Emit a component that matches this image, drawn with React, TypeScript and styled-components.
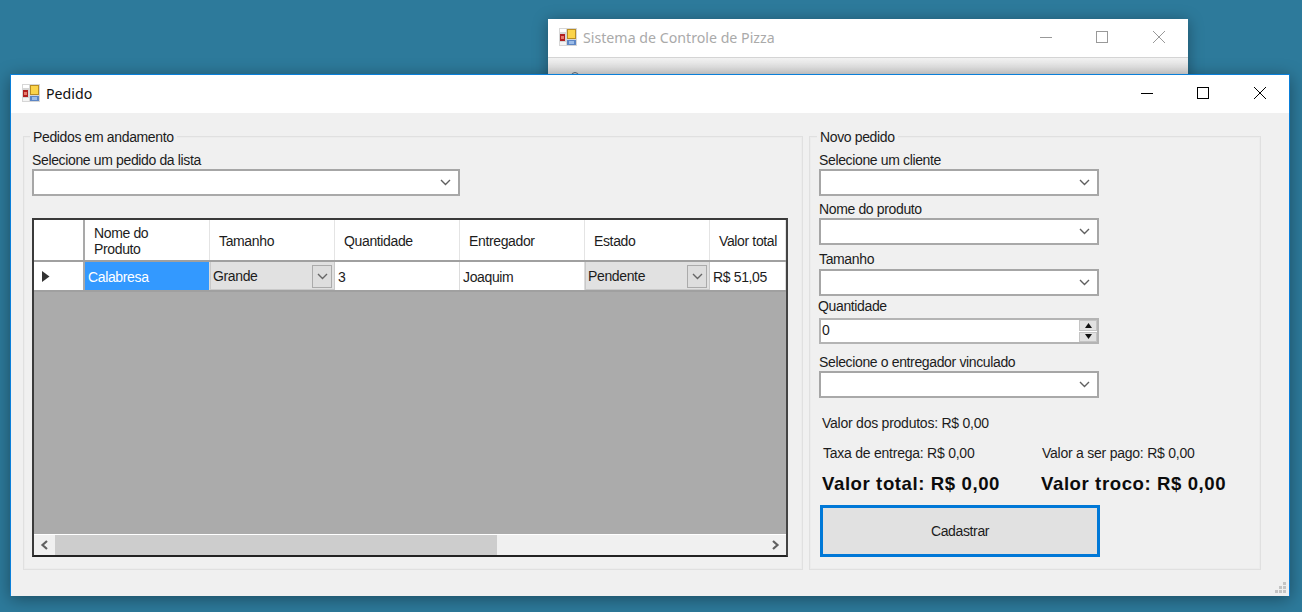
import React from "react";
import styled, { createGlobalStyle } from "styled-components";

const Global = createGlobalStyle`
  html, body { margin: 0; padding: 0; background: #2d7a9b; }
  * { box-sizing: border-box; }
`;

const Desktop = styled.div`
  position: relative;
  width: 1302px;
  height: 612px;
  overflow: hidden;
  background: #2d7a9b;
  font-family: "Liberation Sans", Arial, sans-serif;
  font-size: 14px;
  line-height: 16px;
  letter-spacing: -0.36px;
  color: #1c1c1c;
`;

const BackWindow = styled.section`
  position: absolute;
  left: 548px;
  top: 19px;
  width: 640px;
  height: 90px;
  background: #fff;
  box-shadow: 0 2px 14px rgba(0, 0, 0, 0.35);
`;

const MainWindow = styled.section`
  position: absolute;
  left: 10px;
  top: 74px;
  width: 1280px;
  height: 522px;
  display: flex;
  flex-direction: column;
  border: 1px solid #0a7fd9;
  border-bottom: 0;
  background: #f0f0f0;
  box-shadow: 0 3px 16px rgba(0, 0, 0, 0.38);
`;

const TitleBar = styled.header`
  height: 38px;
  flex: none;
  display: flex;
  align-items: center;
  padding: 0 0 2px 11px;
  background: #fff;
`;

const TitleText = styled.span<{ $dim?: boolean }>`
  margin: 2px 0 0 6px;
  font-family: "Noto Sans", "Open Sans", sans-serif;
  font-size: 14.2px;
  line-height: 20px;
  letter-spacing: 0;
  color: ${(p) => (p.$dim ? "#aaaaaa" : "#111")};
`;

const Controls = styled.div`
  margin-left: auto;
  margin-right: 1px;
  display: flex;
  align-items: center;
`;

const ControlButton = styled.span`
  width: 56.5px;
  height: 36px;
  display: flex;
  align-items: center;
  justify-content: center;
`;

const MenuStrip = styled.div`
  position: relative;
  height: 33px;
  border-top: 1px solid #d4d4d4;
  background: linear-gradient(#f2f2f2, #d9d9d9 50%);
`;

const MenuMark = styled.span`
  position: absolute;
  left: 23px;
  top: 14px;
  width: 8px;
  height: 8px;
  border: 1px solid #5a6a78;
  border-radius: 50%;
`;

const Body = styled.main`
  flex: 1;
  display: flex;
  gap: 6px;
  padding: 23px 28px 26px 12px;
  min-height: 0;
`;

const Group = styled.div<{ $width: number; $pad: number }>`
  position: relative;
  width: ${(p) => p.$width}px;
  height: 434px;
  flex: none;
  border: 1px solid #e0e0e0;
  box-shadow: inset 0 0 0 1px #ececec;
  padding: 15px 0 0 ${(p) => p.$pad}px;
`;

const Legend = styled.span<{ $left: number }>`
  position: absolute;
  left: ${(p) => p.$left}px;
  top: -8px;
  padding: 0 3px;
  background: #f0f0f0;
  color: #1c1c1c;
`;

const FieldLabel = styled.label<{ $top?: number; $left?: number }>`
  display: block;
  height: 16px;
  margin-top: ${(p) => p.$top ?? 0}px;
  margin-left: ${(p) => p.$left ?? 0}px;
  white-space: nowrap;
`;

const Combo = styled.div<{ $width: number; $top?: number }>`
  position: relative;
  width: ${(p) => p.$width}px;
  height: 27px;
  margin-top: ${(p) => p.$top ?? 1}px;
  background: #fff;
  border: 2px solid #a6a6a6;
  border-bottom-color: #a9a9a9;
  display: flex;
  align-items: center;
  justify-content: flex-end;
  padding-right: 7px;
`;

const Spinner = styled.div`
  width: 280px;
  height: 26px;
  margin-top: 4px;
  display: flex;
  align-items: stretch;
  justify-content: space-between;
  background: #fff;
  border: 2px solid #b4b4b4;
  padding-left: 1px;
  font-size: 14px;
  line-height: 21px;
`;

const SpinButtons = styled.div`
  width: 18px;
  display: flex;
  flex-direction: column;
  gap: 1px;
  background: #fff;
`;

const SpinButton = styled.span`
  flex: 1;
  display: flex;
  align-items: center;
  justify-content: center;
  background: #e1e1e1;
  border: 1px solid #c4c4c4;
`;

const Summary = styled.div<{ $top: number; $bold?: boolean }>`
  display: flex;
  margin-top: ${(p) => p.$top}px;
  white-space: nowrap;
  font-weight: ${(p) => (p.$bold ? 700 : 400)};
  font-size: ${(p) => (p.$bold ? "18.6px" : "14px")};
  line-height: ${(p) => (p.$bold ? "20px" : "16px")};
  letter-spacing: ${(p) => (p.$bold ? "0.58px" : "-0.24px")};
  color: ${(p) => (p.$bold ? "#0c0c0c" : "#1c1c1c")};
`;

const SummaryCell = styled.span<{ $width?: number; $left?: number }>`
  display: block;
  width: ${(p) => (p.$width ? `${p.$width}px` : "auto")};
  margin-left: ${(p) => p.$left ?? 0}px;
`;

const SubmitButton = styled.button`
  display: block;
  width: 280px;
  height: 52px;
  margin: 11px 0 0 1px;
  border: 3px solid #0078d7;
  background: #e1e1e1;
  color: #1c1c1c;
  font: inherit;
  letter-spacing: inherit;
  padding: 0;
`;

const DataGrid = styled.div`
  width: 756px;
  height: 339px;
  margin-top: 22px;
  display: flex;
  flex-direction: column;
  border: 2px solid #3a3a3a;
  border-right-color: #444;
  border-bottom-color: #222;
  background: #ababab;
`;

const Columns = "51px 125px 125px 125px 125px 125px 76px";

const GridHeader = styled.div`
  height: 42px;
  flex: none;
  display: grid;
  grid-template-columns: ${Columns};
  background: #fff;
  border-bottom: 2px solid #a0a0a0;
`;

const HeaderCell = styled.div<{ $corner?: boolean }>`
  display: flex;
  align-items: center;
  padding: 2px 0 0 9px;
  border-right: ${(p) => (p.$corner ? "2px solid #a9a9a9" : "1px solid #e4e4e4")};
  color: #1c1c1c;
  overflow: hidden;
  white-space: pre-line;
`;

const GridRow = styled.div`
  height: 30px;
  flex: none;
  display: grid;
  grid-template-columns: ${Columns};
  background: #fff;
  border-bottom: 2px solid #a0a0a0;
`;

const RowHeader = styled.div`
  display: flex;
  align-items: center;
  padding-left: 8px;
  border-right: 2px solid #a9a9a9;
`;

const Cell = styled.div<{ $selected?: boolean }>`
  display: flex;
  align-items: center;
  padding: 1px 0 0 3px;
  background: ${(p) => (p.$selected ? "#3399ff" : "#fff")};
  color: ${(p) => (p.$selected ? "#fff" : "#1c1c1c")};
  border-right: 1px solid #dcdcdc;
  white-space: nowrap;
  overflow: hidden;
`;

const ComboCell = styled.div`
  display: flex;
  align-items: center;
  justify-content: space-between;
  padding: 1px 2px 0 2px;
  background: #e1e1e1;
  border: 1px solid #c9c9c9;
  border-width: 0 1px 1px 1px;
`;

const CellDrop = styled.span`
  width: 20px;
  height: 23px;
  display: flex;
  align-items: center;
  justify-content: center;
  background: #dedede;
  border: 1px solid #ababab;
`;

const GridEmpty = styled.div`
  flex: 1;
  background: #ababab;
`;

const ScrollBar = styled.div`
  height: 21px;
  flex: none;
  display: flex;
  align-items: stretch;
  background: #f0f0f0;
  border-top: 1px solid #fff;
`;

const ScrollArrow = styled.span`
  width: 21px;
  flex: none;
  display: flex;
  align-items: center;
  justify-content: center;
`;

const ScrollThumb = styled.span`
  width: 442px;
  flex: none;
  background: #cdcdcd;
`;

const ScrollGap = styled.span`
  flex: 1;
`;

const GripMark = styled.svg`
  position: absolute;
  right: 2px;
  bottom: 2px;
`;

const AppIcon = () => (
  <svg width="18" height="18" viewBox="0 0 18 18" style={{ flex: "none" }}>
    <rect width="18" height="18" fill="#d6d6d6" />
    <rect x="1" y="1" width="6" height="3" fill="#fff" />
    <rect x="1" y="14" width="6" height="3" fill="#f4f4f4" />
    <rect x="8" y="1" width="9" height="10" fill="#b98d22" />
    <rect x="9" y="2" width="7" height="8" fill="#fbd44a" />
    <rect x="1" y="6" width="5" height="7" fill="#b01f1f" />
    <rect x="2" y="8" width="3" height="3" fill="#e77a6b" />
    <rect x="8" y="12" width="9" height="5" fill="#5d86c5" />
    <rect x="10" y="13" width="5" height="3" fill="#9bbce8" />
  </svg>
);

const WindowControls = ({ color }: { color: string }) => (
  <Controls>
    <ControlButton>
      <svg width="14" height="14" viewBox="0 0 14 14">
        <path d="M1 7.5h12" stroke={color} fill="none" />
      </svg>
    </ControlButton>
    <ControlButton>
      <svg width="14" height="14" viewBox="0 0 14 14">
        <rect x="1.5" y="1.5" width="11" height="11" stroke={color} fill="none" />
      </svg>
    </ControlButton>
    <ControlButton>
      <svg width="14" height="14" viewBox="0 0 14 14">
        <path d="M1 1l12 12M13 1L1 13" stroke={color} fill="none" strokeWidth="1" />
      </svg>
    </ControlButton>
  </Controls>
);

const Chevron = ({ color = "#606060" }: { color?: string }) => (
  <svg width="11" height="7" viewBox="0 0 11 7">
    <path d="M1 1l4.5 4.5L10 1" stroke={color} strokeWidth="1.4" fill="none" />
  </svg>
);

const Triangle = ({ down }: { down?: boolean }) => (
  <svg width="9" height="5" viewBox="0 0 9 5">
    <path d={down ? "M1 0h7L4.5 5z" : "M4.5 0L8 5H1z"} fill="#111" />
  </svg>
);

const columns = ["Nome do\nProduto", "Tamanho", "Quantidade", "Entregador", "Estado", "Valor total"];

export default function App() {
  return (
    <Desktop>
      <Global />
      <BackWindow>
        <TitleBar>
          <AppIcon />
          <TitleText $dim>Sistema de Controle de Pizza</TitleText>
          <WindowControls color="#999" />
        </TitleBar>
        <MenuStrip>
          <MenuMark />
        </MenuStrip>
      </BackWindow>

      <MainWindow>
        <TitleBar>
          <AppIcon />
          <TitleText>Pedido</TitleText>
          <WindowControls color="#000" />
        </TitleBar>
        <Body>
          <Group $width={780} $pad={8}>
            <Legend $left={6}>Pedidos em andamento</Legend>
            <FieldLabel>Selecione um pedido da lista</FieldLabel>
            <Combo $width={428}>
              <Chevron />
            </Combo>
            <DataGrid>
              <GridHeader>
                <HeaderCell $corner />
                {columns.map((c) => (
                  <HeaderCell key={c}>{c}</HeaderCell>
                ))}
              </GridHeader>
              <GridRow>
                <RowHeader>
                  <svg width="8" height="11" viewBox="0 0 8 11">
                    <path d="M0 0l7.5 5.5L0 11z" fill="#333" />
                  </svg>
                </RowHeader>
                <Cell $selected>Calabresa</Cell>
                <ComboCell>
                  Grande
                  <CellDrop>
                    <Chevron color="#666" />
                  </CellDrop>
                </ComboCell>
                <Cell>3</Cell>
                <Cell>Joaquim</Cell>
                <ComboCell>
                  Pendente
                  <CellDrop>
                    <Chevron color="#666" />
                  </CellDrop>
                </ComboCell>
                <Cell>R$ 51,05</Cell>
              </GridRow>
              <GridEmpty />
              <ScrollBar>
                <ScrollArrow>
                  <svg width="9" height="10" viewBox="0 0 9 10">
                    <path d="M7 1L2.5 5 7 9" stroke="#606060" strokeWidth="2.2" fill="none" />
                  </svg>
                </ScrollArrow>
                <ScrollThumb />
                <ScrollGap />
                <ScrollArrow>
                  <svg width="9" height="10" viewBox="0 0 9 10">
                    <path d="M2 1l4.5 4L2 9" stroke="#606060" strokeWidth="2.2" fill="none" />
                  </svg>
                </ScrollArrow>
              </ScrollBar>
            </DataGrid>
          </Group>

          <Group $width={452} $pad={9}>
            <Legend $left={7}>Novo pedido</Legend>
            <FieldLabel>Selecione um cliente</FieldLabel>
            <Combo $width={280}>
              <Chevron />
            </Combo>
            <FieldLabel $top={5}>Nome do produto</FieldLabel>
            <Combo $width={280}>
              <Chevron />
            </Combo>
            <FieldLabel $top={6}>Tamanho</FieldLabel>
            <Combo $width={280} $top={2}>
              <Chevron />
            </Combo>
            <FieldLabel $top={2} $left={-1}>
              Quantidade
            </FieldLabel>
            <Spinner>
              0
              <SpinButtons>
                <SpinButton>
                  <Triangle />
                </SpinButton>
                <SpinButton>
                  <Triangle down />
                </SpinButton>
              </SpinButtons>
            </Spinner>
            <FieldLabel $top={10}>Selecione o entregador vinculado</FieldLabel>
            <Combo $width={280}>
              <Chevron />
            </Combo>
            <Summary $top={17}>
              <SummaryCell $left={3}>Valor dos produtos: R$ 0,00</SummaryCell>
            </Summary>
            <Summary $top={14}>
              <SummaryCell $left={4} $width={219}>
                Taxa de entrega: R$ 0,00
              </SummaryCell>
              <SummaryCell>Valor a ser pago: R$ 0,00</SummaryCell>
            </Summary>
            <Summary $top={13} $bold>
              <SummaryCell $left={3} $width={219}>
                Valor total: R$ 0,00
              </SummaryCell>
              <SummaryCell>Valor troco: R$ 0,00</SummaryCell>
            </Summary>
            <SubmitButton>Cadastrar</SubmitButton>
          </Group>
        </Body>
        <GripMark width="12" height="12" viewBox="0 0 12 12">
          <g fill="#c4c4c4">
            <rect x="8" y="0" width="3" height="3" />
            <rect x="4" y="4" width="3" height="3" />
            <rect x="8" y="4" width="3" height="3" />
            <rect x="0" y="8" width="3" height="3" />
            <rect x="4" y="8" width="3" height="3" />
            <rect x="8" y="8" width="3" height="3" />
          </g>
        </GripMark>
      </MainWindow>
    </Desktop>
  );
}
